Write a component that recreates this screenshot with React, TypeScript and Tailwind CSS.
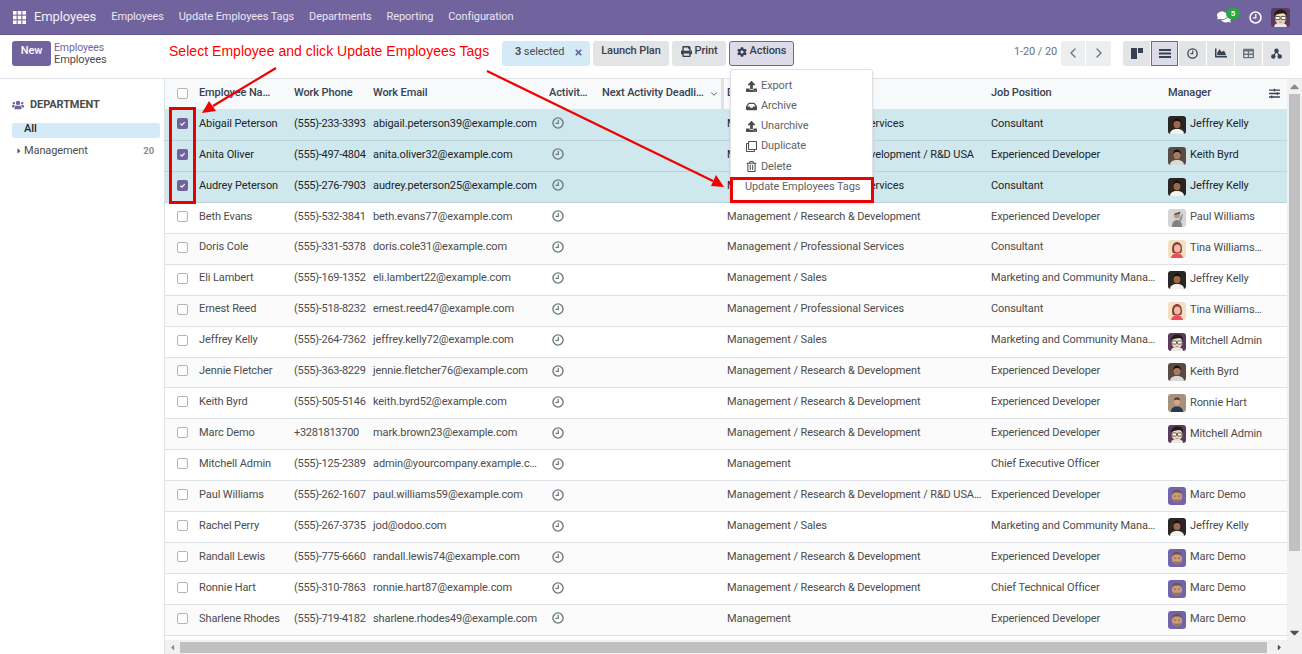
import React from "react";
import { FaUsers, FaCog, FaPrint, FaInbox, FaUpload, FaRegClone, FaRegTrashAlt, FaChartArea, FaTable, FaSlidersH, FaComments, FaTimes, FaCaretRight, FaCaretLeft, FaCaretUp, FaCaretDown } from "react-icons/fa";
import { LuChevronLeft, LuChevronRight, LuChevronDown } from "react-icons/lu";

type Av = "jeffrey" | "keith" | "paul" | "tina" | "mitchell" | "ronnie" | "marc" | "";

function Avatar({ kind, size = 18 }: { kind: Av; size?: number }) {
  if (!kind) return null;
  const common = { width: size, height: size, viewBox: "0 0 18 18", className: "rounded-[3px] shrink-0" };
  if (kind === "mitchell")
    return (
      <svg {...common}>
        <rect width="18" height="18" fill="#5b3a5c" />
        <path d="M3 18c0-3 3-4 6-4s6 1 6 4z" fill="#e8e8e8" />
        <ellipse cx="9" cy="9.500" rx="5.500" ry="5.700" fill="#f3d7b8" />
        <path d="M3 8.500C2.500 3 7 1 10 1.500c3.500 .2 5.500 2.500 5 7-1-2.500-2-3.500-3.500-3.500C9 5.500 5 5 3 8.500z" fill="#1d1d22" />
        <rect x="4" y="8" width="4.500" height="3" rx=".6" fill="#fff" stroke="#222" strokeWidth=".7" />
        <rect x="9.500" y="8" width="4.500" height="3" rx=".6" fill="#fff" stroke="#222" strokeWidth=".7" />
        <path d="M7.500 13.500h3" stroke="#a66" strokeWidth=".7" />
      </svg>
    );
  if (kind === "marc")
    return (
      <svg {...common}>
        <rect width="18" height="18" fill="#7263ad" />
        <ellipse cx="9" cy="9.500" rx="5.200" ry="6" fill="#c99a7c" />
        <path d="M4 8c0-4 2.500-5 5-5s5 1 5 5c-1-2-2-2.500-5-2.500S5 6 4 8z" fill="#6f5440" />
        <path d="M5 12c1 3 2.500 3.500 4 3.500s3-.5 4-3.500c-1 1-7 1-8 0z" fill="#94735b" />
        <circle cx="7" cy="9" r=".6" fill="#3a2a20" />
        <circle cx="11" cy="9" r=".6" fill="#3a2a20" />
      </svg>
    );
  if (kind === "tina")
    return (
      <svg {...common}>
        <rect width="18" height="18" fill="#f2dfc4" />
        <path d="M4 9c0-5 2.500-7 5-7s5 2 5 7c0 3-1 4-1 4H5s-1-1-1-4z" fill="#8c3f3c" />
        <ellipse cx="9.300" cy="8.500" rx="3.300" ry="4" fill="#eebb9f" />
        <path d="M3 18c.5-3 3-5 6-5s5.500 2 6 5z" fill="#ee4d5a" />
      </svg>
    );
  if (kind === "paul")
    return (
      <svg {...common}>
        <rect width="18" height="18" fill="#d5d5d3" />
        <path d="M4 18c0-5 2-7 5-7s5 2 5 7z" fill="#7d8580" />
        <circle cx="9" cy="6.500" r="3" fill="#bd9a80" />
        <path d="M6 5l6-2.500.5 2L7 6z" fill="#555" />
        <path d="M11 11l3-6 1 .5-2 7z" fill="#8a8f8c" />
      </svg>
    );
  if (kind === "ronnie")
    return (
      <svg {...common}>
        <rect width="18" height="18" fill="#a6917c" />
        <path d="M3 18c0-4 2.500-5.500 6-5.500s6 1.500 6 5.500z" fill="#2b3a4d" />
        <ellipse cx="9" cy="7.500" rx="3" ry="3.800" fill="#d3a68a" />
        <path d="M6 6.500C6 4 7.500 3.500 9 3.500s3 .5 3 3c-1-1-5-1-6 0z" fill="#4c3d33" />
      </svg>
    );
  const keith = kind === "keith";
  return (
    <svg {...common}>
      <rect width="18" height="18" fill={keith ? "#5a4c44" : "#2c2622"} />
      <path d="M2 18c0-3.500 3-5 7-5s7 1.500 7 5z" fill={keith ? "#d9d9d6" : "#f2f2ee"} />
      <ellipse cx="9" cy="8" rx="3.400" ry="4.300" fill={keith ? "#a87a5f" : "#9c6a48"} />
      <path d="M5.300 7.500C5 4 7 2.500 9 2.500s4 1.500 3.700 5c-.7-2-2-2.500-3.700-2.500s-3 .5-3.700 2.500z" fill="#17120f" />
    </svg>
  );
}

function Clock({ color = "#6d7a80", size = 12 }: { color?: string; size?: number }) {
  return (
    <svg width={size} height={size} viewBox="0 0 13 13" className="shrink-0">
      <circle cx="6.500" cy="6.500" r="5.500" stroke={color} strokeWidth="1.500" fill="none" />
      <path d="M6.800 3v3.800H3.800" stroke={color} strokeWidth="1.300" fill="none" />
    </svg>
  );
}

const rows: [string, string, string, string, string, string, Av][] = [
  ["Abigail Peterson", "(555)-233-3393", "abigail.peterson39@example.com", "Management / Professional Services", "Consultant", "Jeffrey Kelly", "jeffrey"],
  ["Anita Oliver", "(555)-497-4804", "anita.oliver32@example.com", "Management / Research & Development / R&D USA", "Experienced Developer", "Keith Byrd", "keith"],
  ["Audrey Peterson", "(555)-276-7903", "audrey.peterson25@example.com", "Management / Professional Services", "Consultant", "Jeffrey Kelly", "jeffrey"],
  ["Beth Evans", "(555)-532-3841", "beth.evans77@example.com", "Management / Research & Development", "Experienced Developer", "Paul Williams", "paul"],
  ["Doris Cole", "(555)-331-5378", "doris.cole31@example.com", "Management / Professional Services", "Consultant", "Tina Williamson", "tina"],
  ["Eli Lambert", "(555)-169-1352", "eli.lambert22@example.com", "Management / Sales", "Marketing and Community Manager", "Jeffrey Kelly", "jeffrey"],
  ["Ernest Reed", "(555)-518-8232", "ernest.reed47@example.com", "Management / Professional Services", "Consultant", "Tina Williamson", "tina"],
  ["Jeffrey Kelly", "(555)-264-7362", "jeffrey.kelly72@example.com", "Management / Sales", "Marketing and Community Manager", "Mitchell Admin", "mitchell"],
  ["Jennie Fletcher", "(555)-363-8229", "jennie.fletcher76@example.com", "Management / Research & Development", "Experienced Developer", "Keith Byrd", "keith"],
  ["Keith Byrd", "(555)-505-5146", "keith.byrd52@example.com", "Management / Research & Development", "Experienced Developer", "Ronnie Hart", "ronnie"],
  ["Marc Demo", "+3281813700", "mark.brown23@example.com", "Management / Research & Development", "Experienced Developer", "Mitchell Admin", "mitchell"],
  ["Mitchell Admin", "(555)-125-2389", "admin@yourcompany.example.com", "Management", "Chief Executive Officer", "", ""],
  ["Paul Williams", "(555)-262-1607", "paul.williams59@example.com", "Management / Research & Development / R&D USA Team", "Experienced Developer", "Marc Demo", "marc"],
  ["Rachel Perry", "(555)-267-3735", "jod@odoo.com", "Management / Sales", "Marketing and Community Manager", "Jeffrey Kelly", "jeffrey"],
  ["Randall Lewis", "(555)-775-6660", "randall.lewis74@example.com", "Management / Research & Development", "Experienced Developer", "Marc Demo", "marc"],
  ["Ronnie Hart", "(555)-310-7863", "ronnie.hart87@example.com", "Management / Research & Development", "Chief Technical Officer", "Marc Demo", "marc"],
  ["Sharlene Rhodes", "(555)-719-4182", "sharlene.rhodes49@example.com", "Management", "Experienced Developer", "Marc Demo", "marc"],
];

const COLS = "grid grid-cols-[28px_95px_79px_176px_53px_125px_264px_177px_125px]";

function Check({ on }: { on?: boolean }) {
  return on ? (
    <span className="flex h-[11px] w-[11px] items-center justify-center rounded-[2px] bg-[#71639e]">
      <svg width="7" height="7" viewBox="0 0 8 8"><path d="M1.500 4.200l1.800 1.700 3.200-3.600" stroke="#fff" strokeWidth="1.300" fill="none" /></svg>
    </span>
  ) : (
    <span className="h-[11px] w-[11px] rounded-[2px] border border-[#b4b4b4] bg-white" />
  );
}

function Cell({ children, cls = "pr-[5px] pb-[2px]" }: { children: React.ReactNode; cls?: string }) {
  return <div className={`truncate pl-[6px] ${cls}`}>{children}</div>;
}

function Row({ r, i }: { r: (typeof rows)[number]; i: number }) {
  const sel = i < 3;
  return (
    <div
      className={`${COLS} h-[30.940px] items-center border-b ${sel ? "border-[#b8d3da] bg-[#cfe8ed] text-[#212529]" : i % 2 ? "border-[#dee2e6] bg-white text-[#4c4c4c]" : "border-[#dee2e6] bg-[#fbfbfb] text-[#4c4c4c]"}`}
    >
      <div className="flex justify-center pb-[3px] pl-[8px] pr-[2px]"><Check on={sel} /></div>
      <Cell>{r[0]}</Cell>
      <Cell cls="pb-[2px] tracking-[-0.280px]">{r[1]}</Cell>
      <Cell>{r[2]}</Cell>
      <div className="pb-[3px] pl-[9px]"><Clock /></div>
      <div />
      <Cell cls="pb-[2px] pr-[2px]">{r[3]}</Cell>
      <Cell>{r[4]}</Cell>
      <div className="flex items-center gap-[4px] px-[6px]">
        <Avatar kind={r[6]} />
        <span className={`pb-px ${r[5] === "Tina Williamson" ? "block w-[73px] truncate" : "truncate"}`}>{r[5]}</span>
      </div>
    </div>
  );
}

function Btn({ children, cls = "" }: { children: React.ReactNode; cls?: string }) {
  return <div className={`flex h-[25px] items-center justify-center rounded-[3px] bg-[#e2e4e6] pb-[3px] font-medium text-[#374151] ${cls}`}>{children}</div>;
}

function ViewBtn({ children, active }: { children: React.ReactNode; active?: boolean }) {
  return (
    <div className={`flex h-[25px] w-[27px] items-center justify-center ${active ? "border border-[#71639e] bg-[#dedbe8]" : "bg-[#e2e4e6]"} text-[#374151]`}>
      {children}
    </div>
  );
}

function MenuItem({ icon, label }: { icon: React.ReactNode; label: string }) {
  return (
    <div className="flex h-[20.200px] items-center gap-[4px] pl-[15px] text-[#5f6368]">
      <span className="flex w-[11px] justify-center text-[11px] text-[#4c4c4c]">{icon}</span>
      <span>{label}</span>
    </div>
  );
}

export default function App() {
  return (
    <div className="relative flex h-[654px] w-[1302px] flex-col overflow-hidden bg-white text-[11px] tracking-[-0.100px] text-[#4c4c4c] [font-family:'Roboto',sans-serif]">
      {/* navbar */}
      <header className="flex h-[35px] shrink-0 items-center border-b border-[#5f5488] bg-[#71639e] pl-[13px] pr-[12px] text-white">
        <svg width="13" height="13" viewBox="0 0 13 13" className="shrink-0">
          {[0, 4.700, 9.400].flatMap((y) => [0, 4.700, 9.400].map((x) => <rect key={`${x}-${y}`} x={x} y={y} width="3.600" height="3.600" fill="#fff" />))}
        </svg>
        <span className="ml-[8px] text-[13px] text-[#f1eff6]">Employees</span>
        <nav className="ml-[15px] flex gap-[15px] pt-[1px] text-[#e9e6f1]">
          <span>Employees</span>
          <span>Update Employees Tags</span>
          <span>Departments</span>
          <span>Reporting</span>
          <span>Configuration</span>
        </nav>
        <div className="ml-auto flex items-center">
          <div className="relative mr-[11px]">
            <FaComments className="text-[14px] text-white" />
            <span className="absolute left-[9px] top-[-2px] flex h-[11px] w-[14px] items-center justify-center rounded-full bg-[#28a745] text-[8px] font-bold text-white">5</span>
          </div>
          <div className="ml-[7px] mr-[9px]"><Clock color="#ffffff" size={13} /></div>
          <Avatar kind="mitchell" size={19} />
        </div>
      </header>

      {/* control panel */}
      <div className="flex h-[44px] shrink-0 items-center border-b border-[#dee2e6] pb-[7px] pl-[12px] pr-[12px]">
        <Btn cls="w-[39px] !bg-[#71639e] !text-white">New</Btn>
        <div className="ml-[3px] flex w-[115px] flex-col pt-[2px] leading-[12px]">
          <span className="text-[10.500px] text-[#71639e]">Employees</span>
          <span className="text-[#4c4c4c]">Employees</span>
        </div>
        <div className="w-[333px]" />
        <div className="flex h-[25px] w-[88px] items-center gap-[10px] rounded-[3px] bg-[#d4eaf7] pb-px pl-[13px]">
          <span><b className="font-bold">3</b> selected</span>
          <FaTimes className="text-[9px] text-[#71639e]" />
        </div>
        <Btn cls="ml-[3px] w-[76px]">Launch Plan</Btn>
        <Btn cls="ml-[3px] w-[54px] gap-[3px]"><FaPrint className="text-[11px]" />Print</Btn>
        <Btn cls="ml-[3px] w-[65px] gap-[3px] border border-[#71639e] !bg-[#dedbe8]"><FaCog className="text-[10px]" />Actions</Btn>
        <span className="ml-[220px] w-[47px] pb-[2px] text-[#6b7280]">1-20 / 20</span>
        <div className="flex overflow-hidden rounded-[3px]">
          <div className="flex h-[25px] w-[24px] items-center justify-center bg-[#eceef0] text-[#6b7280]"><LuChevronLeft className="text-[16px]" /></div>
          <div className="ml-px flex h-[25px] w-[25px] items-center justify-center bg-[#eceef0] text-[#6b7280]"><LuChevronRight className="text-[16px]" /></div>
        </div>
        <div className="ml-[12px] flex gap-px overflow-hidden rounded-[3px]">
          <ViewBtn>
            <svg width="12" height="11" viewBox="0 0 12 11"><path d="M0 0h6v11H0zM7 0h5v5H7z" fill="#374151" /></svg>
          </ViewBtn>
          <ViewBtn active>
            <svg width="12" height="9" viewBox="0 0 12 9"><path d="M0 0h12v2H0zM0 3.500h12v2H0zM0 7h12v2H0z" fill="#374151" /></svg>
          </ViewBtn>
          <ViewBtn><Clock color="#374151" size={11} /></ViewBtn>
          <ViewBtn><FaChartArea className="text-[12px]" /></ViewBtn>
          <ViewBtn><FaTable className="text-[11px] text-[#6b7280]" /></ViewBtn>
          <ViewBtn>
            <svg width="11" height="11" viewBox="0 0 11 11"><path d="M5.500 3L2.500 8.500M5.500 3l3 5.500" stroke="#374151" strokeWidth="1.200" /><circle cx="5.500" cy="2.700" r="2.200" fill="#374151" /><circle cx="2.300" cy="8.500" r="2.200" fill="#374151" /><circle cx="8.700" cy="8.500" r="2.200" fill="#374151" /></svg>
          </ViewBtn>
        </div>
      </div>

      {/* body */}
      <div className="flex min-h-0 flex-1">
        <aside className="w-[165px] shrink-0 border-r border-[#dee2e6] pl-[12px] pr-[4px] pt-[18px]">
          <div className="flex items-center gap-[6px] font-bold text-[#4c4c4c]">
            <FaUsers className="text-[12px] text-[#71639e]" />
            <span>DEPARTMENT</span>
          </div>
          <div className="mt-[9px] flex h-[15px] items-center rounded-[2px] bg-[#d4eaf7] pb-px pl-[12px] font-medium text-[#212529]">All</div>
          <div className="mt-[6px] flex h-[16px] items-center pb-px pr-[6px]">
            <FaCaretRight className="ml-[3px] text-[8px] text-[#4c4c4c]" />
            <span className="ml-[1px]">Management</span>
            <span className="ml-auto text-[9.500px] font-bold text-[#8a8f94]">20</span>
          </div>
        </aside>

        <div className="flex min-w-0 flex-1 flex-col">
          <div className="flex min-h-0 flex-1">
            <div className="min-w-0 flex-1 overflow-hidden">
              <div className={`${COLS} h-[31px] items-center border-b border-[#dee2e6] bg-[#f8f9fa] font-medium text-[#374151]`}>
                <div className="flex justify-center pb-px pl-[8px] pr-[2px]"><Check /></div>
                <Cell cls="pb-px pr-[14px]">Employee Name</Cell>
                <Cell cls="pb-px">Work Phone</Cell>
                <Cell cls="pb-px">Work Email</Cell>
                <Cell cls="pb-px pr-[6px]">Activities</Cell>
                <div className="flex items-center pb-px pl-[6px]">
                  <span className="w-[105px] shrink-0 truncate">Next Activity Deadline</span>
                  <LuChevronDown className="ml-[2px] shrink-0 text-[10px]" />
                </div>
                <div className="h-full border-l-[3px] border-[#dee2e6] pl-[3px] leading-[28px]">D</div>
                <Cell cls="pb-px">Job Position</Cell>
                <div className="flex items-center justify-between pb-px pl-[6px] pr-[7px]">
                  <span>Manager</span>
                  <FaSlidersH className="text-[11px] text-[#374151]" />
                </div>
              </div>
              {rows.map((r, i) => <Row key={r[0]} r={r} i={i} />)}
            </div>
            <div className="flex w-[15px] shrink-0 flex-col items-center bg-[#f1f1f1] text-[#8a8a8a]">
              <FaCaretUp className="h-[15px] shrink-0 text-[9px]" />
              <div className="h-[457px] w-[11px] shrink-0 bg-[#c1c1c1]" />
              <FaCaretDown className="mt-auto h-[15px] shrink-0 text-[9px] text-[#505050]" />
            </div>
          </div>
          <div className="flex h-[14px] shrink-0 items-center bg-[#f1f1f1]">
            <FaCaretLeft className="w-[15px] shrink-0 text-[9px] text-[#8a8a8a]" />
            <div className="h-[11px] w-[1087px] bg-[#c1c1c1]" />
            <FaCaretRight className="ml-auto mr-[15px] w-[15px] shrink-0 text-[9px] text-[#505050]" />
          </div>
        </div>
      </div>

      {/* Actions dropdown */}
      <div className="absolute left-[730px] top-[69px] h-[134px] w-[143px] rounded-[3px] border border-[#dfe1e4] bg-white pt-[6px] shadow-sm">
        <MenuItem icon={<FaUpload />} label="Export" />
        <MenuItem icon={<FaInbox />} label="Archive" />
        <MenuItem icon={<FaUpload />} label="Unarchive" />
        <MenuItem icon={<FaRegClone />} label="Duplicate" />
        <MenuItem icon={<FaRegTrashAlt />} label="Delete" />
        <div className="whitespace-nowrap pl-[14px] pt-[2px] text-[#5f6368]">Update Employees Tags</div>
      </div>

      {/* annotations */}
      <div className="absolute left-[169px] top-[42px] text-[14px] leading-[19px] tracking-[0.030px] text-[#ff0000] [font-family:'Liberation_Sans',sans-serif]">
        Select Employee and click Update Employees Tags
      </div>
      <div className="absolute left-[169px] top-[107px] h-[97px] w-[27px] border-[3px] border-[#e60000]" />
      <div className="absolute left-[730px] top-[177px] h-[26px] w-[144px] border-[3px] border-[#f00000]" />
      <svg className="pointer-events-none absolute left-0 top-0" width="1302" height="654">
        <path d="M276 68L213 106" stroke="#f00000" strokeWidth="2.200" />
        <path d="M202 113L209 101 216 111z" fill="#f00000" />
        <path d="M487 71L713 181" stroke="#f00000" strokeWidth="2.200" />
        <path d="M724 187L711 186 716 175z" fill="#f00000" />
      </svg>
    </div>
  );
}
